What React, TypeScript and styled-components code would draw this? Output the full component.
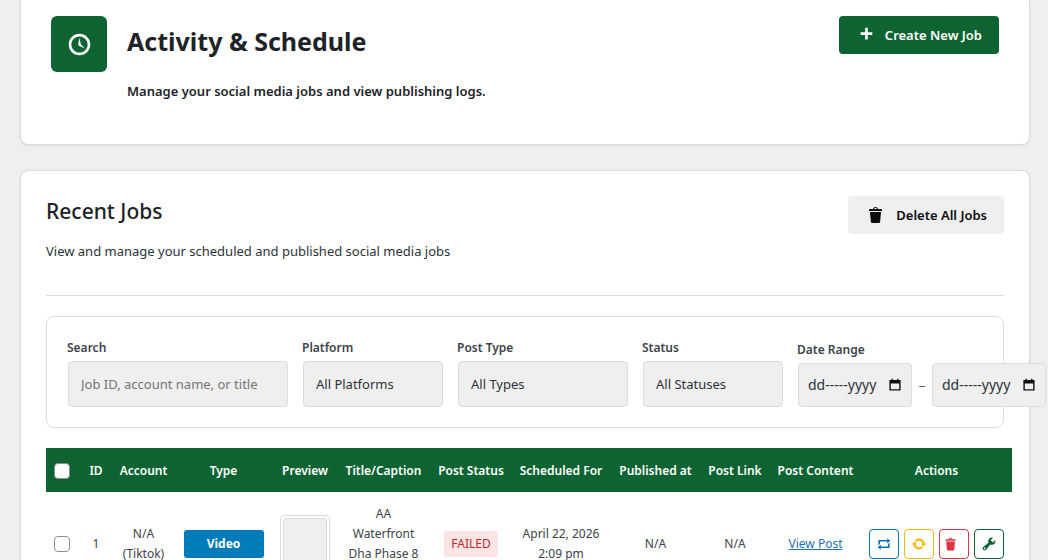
import React from "react";
import styled, { createGlobalStyle } from "styled-components";

const GlobalStyle = createGlobalStyle`
  html { scrollbar-width: none; overflow-x: hidden; }
  *, *::before, *::after { box-sizing: border-box; }
  body {
    margin: 0;
    background: #efefef;
    color: #1d2327;
    font-family: "Noto Sans", "Open Sans", sans-serif;
    font-size: 13px;
    line-height: 20px;
  }
  h1, h2, p { margin: 0; }
  button, input, select { font: inherit; color: inherit; }
`;

const green = "#0d6331";

const Page = styled.main`
  display: flex;
  flex-direction: column;
  gap: 25px;
  padding: 0 18px 0 20px;
`;

const Card = styled.section`
  background: #fff;
  border: 1px solid #d9dadb;
  border-radius: 8px;
  box-shadow: 0 1px 3px rgba(0, 0, 0, 0.06);
`;

const HeroCard = styled(Card)`
  display: flex;
  align-items: flex-start;
  gap: 20px;
  padding: 16px 30px 38px;
  border-top: 0;
  border-radius: 0 0 8px 8px;
`;

const JobsCard = styled(Card)`
  padding: 25px;
`;

const IconTile = styled.div`
  display: grid;
  place-items: center;
  width: 56px;
  height: 56px;
  border-radius: 6px;
  background: ${green};
  color: #fff;
`;

const HeroText = styled.div`
  flex: 1;
  display: flex;
  flex-direction: column;
  gap: 19px;
  padding-top: 9px;
`;

const Title = styled.h1`
  font-size: 25px;
  line-height: 32px;
  font-weight: 700;
`;

const HeroNote = styled.p`
  font-weight: 600;
  line-height: 30px;
`;

const Button = styled.button<{ $primary?: boolean }>`
  display: flex;
  align-items: center;
  gap: 10px;
  height: 38px;
  padding: 0 17px 0 18px;
  border: 0;
  border-radius: 4px;
  background: ${(p) => (p.$primary ? green : "#efefef")};
  color: ${(p) => (p.$primary ? "#fff" : "#0b0d0f")};
  font-weight: 600;
  white-space: nowrap;
`;

const JobsHeader = styled.header`
  display: flex;
  justify-content: space-between;
  align-items: flex-start;
  padding-bottom: 34px;
  border-bottom: 1px solid #dcdcde;
`;

const JobsHeading = styled.div`
  display: flex;
  flex-direction: column;
  gap: 15px;
`;

const Subtitle = styled.h2`
  font-size: 21px;
  line-height: 30px;
  font-weight: 500;
`;

const JobsNote = styled.p`
  color: #2c3338;
`;

const Filters = styled.form`
  display: flex;
  align-items: flex-end;
  gap: 13px;
  margin: 20px 0;
  padding: 20px;
  border: 1px solid #dcdcde;
  border-radius: 8px;
`;

const Field = styled.div<{ $width: number }>`
  display: flex;
  flex-direction: column;
  gap: 3px;
  flex: 0 0 ${(p) => p.$width}px;
`;

const Label = styled.label`
  padding-top: 1px;
  font-size: 12px;
  font-weight: 600;
  color: #3c434a;
`;

const Control = styled.input`
  height: 46px;
  margin: 0 1px;
  padding: 0 12px;
  border: 1px solid #dcdcde;
  border-radius: 4px;
  background: #efefef;
  color: #2c3338;
  &::placeholder { color: #757575; opacity: 1; }
`;

const Select = styled(Control).attrs({ as: "select" })`
  appearance: none;
`;

const DateRow = styled.div`
  display: flex;
  align-items: center;
  gap: 6px;
  padding: 0 1px;
`;

const DateBox = styled.div`
  display: flex;
  align-items: center;
  flex: 0 0 114px;
  min-width: 0;
  height: 44px;
  padding: 0 9px;
  border: 1px solid #dcdcde;
  border-radius: 4px;
  background: #efefef;
  color: #2c3338;
`;

const DateInput = styled.input`
  flex: 1 1 0;
  width: 0;
  min-width: 0;
  padding: 0;
  border: 0;
  background: transparent;
  font-size: 14px;
`;

const PickerButton = styled.button`
  display: flex;
  padding: 0;
  border: 0;
  background: transparent;
  color: #111;
`;

const Dash = styled.span`
  width: 8px;
  text-align: center;
  color: #50575e;
`;

const TableWrap = styled.div`
  margin-right: -8px;
`;

const Table = styled.table`
  width: 100%;
  table-layout: fixed;
  border-collapse: collapse;
  text-align: center;
  font-size: 12px;
  color: #3c434a;
`;

const HeadCell = styled.th`
  height: 44px;
  padding: 2px 0 0;
  background: ${green};
  color: #fff;
  font-weight: 600;
  white-space: nowrap;
`;

const Cell = styled.td<{ $top?: boolean }>`
  height: 104px;
  padding: ${(p) => (p.$top ? "12px" : "12px 6px")};
  vertical-align: ${(p) => (p.$top ? "top" : "middle")};
`;

const Check = styled.input`
  appearance: none;
  display: block;
  width: 16px;
  height: 16px;
  margin: 0 auto;
  border: 1px solid #8c8f94;
  border-radius: 4px;
  background: #fff;
`;

const TypeBadge = styled.span`
  display: block;
  width: 80px;
  margin: 0 auto;
  padding: 4px 0;
  border-radius: 3px;
  background: #007cba;
  color: #fff;
  font-size: 12px;
  font-weight: 700;
`;

const Preview = styled.div`
  width: 50px;
  height: 58px;
  padding: 2px;
  border: 1px solid #dcdcde;
  border-radius: 4px;
  &::before {
    content: "";
    display: block;
    height: 100%;
    border: 1px solid #dcdcde;
    border-radius: 3px;
    background: #efefef;
  }
`;

const StatusBadge = styled.span`
  display: inline-block;
  padding: 3px 7px;
  border-radius: 3px;
  background: #fde4e4;
  color: #b32d2e;
`;

const PostLink = styled.a`
  color: #2271b1;
`;

const Actions = styled.div`
  display: flex;
  justify-content: center;
  gap: 5px;
`;

const ActionButton = styled.button<{ $color: string; $shift?: boolean }>`
  display: flex;
  align-items: center;
  justify-content: ${(p) => (p.$shift ? "flex-start" : "center")};
  width: 30px;
  height: 30px;
  padding: 0 3px;
  border: 1px solid ${(p) => p.$color};
  border-radius: 4px;
  background: #fff;
  color: ${(p) => p.$color};
`;

const paths = {
  clock:
    "M10 2c4.42 0 8 3.58 8 8s-3.58 8-8 8-8-3.58-8-8 3.58-8 8-8zm0 14c3.31 0 6-2.69 6-6s-2.69-6-6-6-6 2.69-6 6 2.69 6 6 6zm-.71-5.29c.07.05.14.1.23.15l-.02.02L14 13l-3.03-3.19L10 5l-.97 4.81h.01c0 .02-.01.05-.02.09S9 9.97 9 10c0 .28.1.52.29.71z",
  plus: "M17 7v3h-5v5H9v-5H4V7h5V2h3v5h5z",
  trash:
    "M12 4h3c.6 0 1 .4 1 1v1H3V5c0-.6.5-1 1-1h3c.2-1.1 1.3-2 2.5-2s2.3.9 2.5 2zM8 4h3c-.2-.6-.9-1-1.5-1S8.2 3.4 8 4zM4 7h11l-.9 10.1c0 .5-.5.9-1 .9H5.9c-.5 0-.9-.4-1-.9L4 7z",
  update:
    "M10.2 3.28c3.53 0 6.43 2.61 6.92 6h2.08l-3.5 4-3.5-4h2.32c-.45-1.97-2.21-3.45-4.32-3.45-1.45 0-2.73.71-3.54 1.78L4.95 5.66C6.23 4.2 8.11 3.28 10.2 3.28zm-.4 13.44c-3.52 0-6.43-2.61-6.92-6H.8l3.5-4c1.17 1.33 2.33 2.67 3.5 4H5.48c.45 1.97 2.21 3.45 4.32 3.45 1.45 0 2.73-.71 3.54-1.78l1.71 1.95c-1.28 1.46-3.15 2.38-5.25 2.38z",
  repeat: "M5 7v3l-2 1.5V5h11V3l4 3.01L14 9V7H5zm10 6v-3l2-1.5V15H6v2l-4-3.01L6 11v2h9z",
  tools:
    "M16.68 9.77c-1.34 1.34-3.3 1.67-4.95.99l-5.41 6.52c-.99.99-2.59.99-3.58 0s-.99-2.59 0-3.57l6.52-5.42c-.68-1.65-.35-3.61.99-4.95 1.28-1.28 3.12-1.62 4.72-1.06l-2.89 2.89 2.82 2.82 2.86-2.87c.53 1.58.18 3.39-1.08 4.65zM3.81 16.21c.4.39 1.04.39 1.43 0 .4-.4.4-1.04 0-1.43-.39-.4-1.03-.4-1.43 0-.39.39-.39 1.03 0 1.43z",
  calendar: "M2 3h3V1h2v2h6V1h2v2h3v15H2zM4 8v8h12V8z",
};

function Icon({ name, size }: { name: keyof typeof paths; size: number }) {
  return (
    <svg width={size} height={size} viewBox="0 0 20 20" fill="currentColor" fillRule="evenodd" aria-hidden="true">
      <path d={paths[name]} />
    </svg>
  );
}

const columns: [string, number][] = [
  ["ID", 36],
  ["Account", 59],
  ["Type", 101],
  ["Preview", 62],
  ["Title/Caption", 95],
  ["Post Status", 80],
  ["Scheduled For", 100],
  ["Published at", 89],
  ["Post Link", 70],
  ["Post Content", 91],
  ["Actions", 151],
];

const selects = [
  { id: "platform", label: "Platform", option: "All Platforms", width: 142 },
  { id: "type", label: "Post Type", option: "All Types", width: 172 },
  { id: "status", label: "Status", option: "All Statuses", width: 142 },
];

function DateField({ id, name }: { id: string; name: string }) {
  return (
    <DateBox>
      <DateInput id={id} aria-label={name} defaultValue="dd-----yyyy" />
      <PickerButton type="button" aria-label={`Pick ${name}`}>
        <Icon name="calendar" size={14} />
      </PickerButton>
    </DateBox>
  );
}

export default function App() {
  return (
    <>
      <GlobalStyle />
      <Page>
        <HeroCard>
          <IconTile>
            <Icon name="clock" size={27} />
          </IconTile>
          <HeroText>
            <Title>Activity &amp; Schedule</Title>
            <HeroNote>Manage your social media jobs and view publishing logs.</HeroNote>
          </HeroText>
          <Button type="button" $primary>
            <Icon name="plus" size={18} />
            Create New Job
          </Button>
        </HeroCard>

        <JobsCard>
          <JobsHeader>
            <JobsHeading>
              <Subtitle>Recent Jobs</Subtitle>
              <JobsNote>View and manage your scheduled and published social media jobs</JobsNote>
            </JobsHeading>
            <Button type="button">
              <Icon name="trash" size={20} />
              Delete All Jobs
            </Button>
          </JobsHeader>

          <Filters>
            <Field $width={222}>
              <Label htmlFor="search">Search</Label>
              <Control id="search" placeholder="Job ID, account name, or title" />
            </Field>
            {selects.map((s) => (
              <Field key={s.id} $width={s.width}>
                <Label htmlFor={s.id}>{s.label}</Label>
                <Select id={s.id}>
                  <option>{s.option}</option>
                </Select>
              </Field>
            ))}
            <Field $width={186}>
              <Label htmlFor="from">Date Range</Label>
              <DateRow>
                <DateField id="from" name="start date" />
                <Dash>–</Dash>
                <DateField id="to" name="end date" />
              </DateRow>
            </Field>
          </Filters>

          <TableWrap>
            <Table>
              <colgroup>
                <col width={32} />
                {columns.map(([name, width]) => (
                  <col key={name} width={width} />
                ))}
              </colgroup>
              <thead>
                <tr>
                  <HeadCell>
                    <Check type="checkbox" aria-label="Select all jobs" />
                  </HeadCell>
                  {columns.map(([name]) => (
                    <HeadCell key={name}>{name}</HeadCell>
                  ))}
                </tr>
              </thead>
              <tbody>
                <tr>
                  <Cell>
                    <Check type="checkbox" aria-label="Select job 1" />
                  </Cell>
                  <Cell>1</Cell>
                  <Cell>N/A (Tiktok)</Cell>
                  <Cell>
                    <TypeBadge>Video</TypeBadge>
                  </Cell>
                  <Cell>
                    <Preview />
                  </Cell>
                  <Cell $top>AA Waterfront Dha Phase 8</Cell>
                  <Cell>
                    <StatusBadge>FAILED</StatusBadge>
                  </Cell>
                  <Cell>
                    April 22, 2026
                    <br />
                    2:09 pm
                  </Cell>
                  <Cell>N/A</Cell>
                  <Cell>N/A</Cell>
                  <Cell>
                    <PostLink href="#post">View Post</PostLink>
                  </Cell>
                  <Cell>
                    <Actions>
                      <ActionButton type="button" aria-label="Repost" $color="#0073bb">
                        <Icon name="repeat" size={16} />
                      </ActionButton>
                      <ActionButton type="button" aria-label="Refresh" $color="#f0b90f">
                        <Icon name="update" size={16} />
                      </ActionButton>
                      <ActionButton type="button" aria-label="Delete" $color="#dc3545" $shift>
                        <Icon name="trash" size={16} />
                      </ActionButton>
                      <ActionButton type="button" aria-label="Tools" $color={green}>
                        <Icon name="tools" size={16} />
                      </ActionButton>
                    </Actions>
                  </Cell>
                </tr>
              </tbody>
            </Table>
          </TableWrap>
        </JobsCard>
      </Page>
    </>
  );
}
